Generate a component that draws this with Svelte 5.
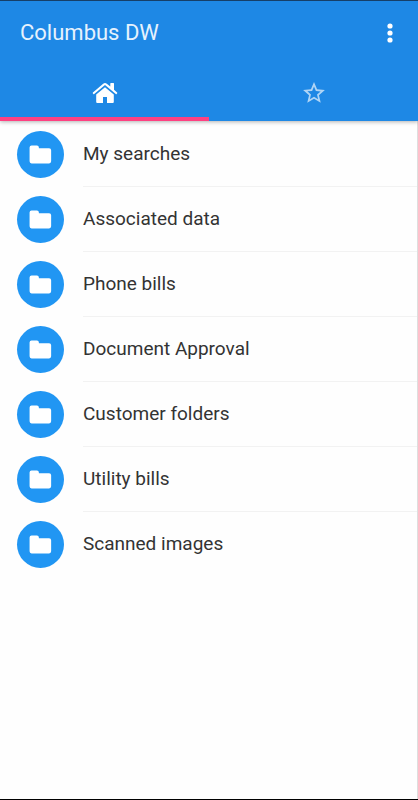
<script>
  const folders = [
    "My searches",
    "Associated data",
    "Phone bills",
    "Document Approval",
    "Customer folders",
    "Utility bills",
    "Scanned images",
  ];

  let tab = $state("home");
</script>

<div class="app">
  <header>
    <div class="toolbar">
      <h1>Columbus DW</h1>
      <button class="more" aria-label="More options">
        <svg viewBox="0 0 6 20" width="6" height="20">
          <circle cx="3" cy="3" r="2.6" />
          <circle cx="3" cy="10" r="2.6" />
          <circle cx="3" cy="17" r="2.6" />
        </svg>
      </button>
    </div>
    <div class="tabs" role="tablist">
      <button role="tab" aria-label="Home" aria-selected={tab === "home"} class:active={tab === "home"} onclick={() => (tab = "home")}>
        <svg viewBox="0 0 26 22" width="26" height="22">
          <path d="M13 5.2 L4.2 12.5 V20 Q4.2 21 5.2 21 H11 V15 H15 V21 H20.8 Q21.8 21 21.8 20 V12.5 Z" />
          <path d="M25.1 10.5 L22 7.8 V1.6 Q22 1 21.4 1 H18.9 Q18.3 1 18.3 1.6 V4.6 L14.8 1.7 Q13 .3 11.2 1.7 L.9 10.5 Q.5 10.9 .8 11.3 L1.4 12 Q1.8 12.4 2.2 12 L13 3.1 L23.8 12 Q24.2 12.4 24.6 12 L25.2 11.3 Q25.5 10.9 25.1 10.5 Z" />
        </svg>
      </button>
      <button role="tab" aria-label="Favourites" aria-selected={tab === "starred"} class:active={tab === "starred"} onclick={() => (tab = "starred")}>
        <svg viewBox="1 1 22 22" width="24" height="24">
          <path d="M22 9.24l-7.19-.62L12 2 9.19 8.63 2 9.24l5.46 4.73L5.82 21 12 17.27 18.18 21l-1.63-7.03L22 9.24zM12 15.4l-3.76 2.27 1-4.28-3.32-2.88 4.38-.38L12 6.1l1.71 4.04 4.38.38-3.32 2.88 1 4.28L12 15.4z" />
        </svg>
      </button>
    </div>
  </header>

  <main>
    {#if tab === "home"}
      <ul>
        {#each folders as name}
          <li>
            <span class="avatar">
              <svg viewBox="0 0 24 20" width="23" height="19">
                <path d="M2.6 .6 H8.2 Q10.3 .6 10.3 2.7 V3.4 H21 Q23.2 3.4 23.2 5.6 V17.2 Q23.2 19.4 21 19.4 H2.6 Q.5 19.4 .5 17.2 V2.7 Q.5 .6 2.6 .6 Z" />
              </svg>
            </span>
            <a href="#{name}">{name}</a>
          </li>
        {/each}
      </ul>
    {/if}
  </main>
</div>

<style>
  :global(body) {
    margin: 0;
    font-family: Roboto, "Liberation Sans", sans-serif;
    background: #fefefe;
  }
  .app {
    display: flex;
    flex-direction: column;
    box-sizing: border-box;
    min-height: 100vh;
    border-bottom: 1px solid #000;
  }
  header {
    background: #1e88e5;
    border-top: 1px solid #163f68;
    box-shadow: 0 1px 4px rgba(0, 0, 0, 0.3);
    z-index: 1;
  }
  .toolbar {
    display: flex;
    align-items: center;
    justify-content: space-between;
    height: 64px;
    padding: 0 18px 0 20px;
  }
  h1 {
    margin: 0;
    color: #e6f2fd;
    font-size: 22px;
    font-weight: 400;
    line-height: 28px;
  }
  button {
    border: 0;
    padding: 0;
    background: none;
    cursor: pointer;
  }
  svg {
    display: block;
    fill: #fff;
  }
  .more {
    display: grid;
    place-items: center;
    width: 20px;
    height: 32px;
  }
  .tabs {
    display: grid;
    grid-template-columns: 1fr 1fr;
    height: 56px;
  }
  .tabs button {
    display: grid;
    place-items: center;
    padding-top: 4px;
    border-bottom: 4px solid transparent;
  }
  .tabs button svg { opacity: 0.65; }
  .tabs button.active { border-bottom-color: #ff4081; }
  .tabs button.active svg { opacity: 1; }
  main {
    flex: 1;
    border-right: 1px solid #dedede;
  }
  ul {
    list-style: none;
    margin: 0;
    padding: 1px 0 0;
  }
  li {
    display: flex;
    align-items: center;
    height: 65px;
    padding-left: 17px;
    gap: 19px;
  }
  .avatar {
    display: grid;
    place-items: center;
    width: 47px;
    height: 47px;
    border-radius: 50%;
    background: #2196f3;
  }
  a {
    flex: 1;
    box-sizing: border-box;
    height: 65px;
    border-bottom: 1px solid #f2f2f2;
    color: #333;
    font-size: 19px;
    line-height: 64px;
    text-decoration: none;
  }
  li:last-child a { border-bottom: 0; }
</style>
